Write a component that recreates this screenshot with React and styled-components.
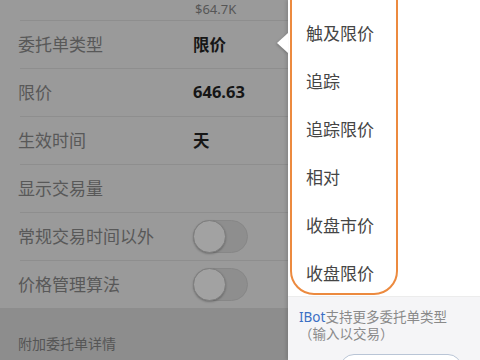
import React from "react";
import styled, { createGlobalStyle } from "styled-components";

const Global = createGlobalStyle`
  html, body { margin: 0; padding: 0; background: #9a9a9a; }
  body { font-family: "Noto Sans", "Noto Sans CJK SC", sans-serif; }
`;

const Page = styled.div`
  position: relative;
  width: 480px;
  height: 360px;
  overflow: hidden;
  display: flex;
`;

const Left = styled.div`
  width: 288px;
  flex: none;
  display: flex;
  flex-direction: column;
  background: #9a9a9a;
`;

const TopStrip = styled.div`
  height: 20px;
  padding-left: 195px;
  font-size: 13px;
  line-height: 18px;
  color: #565656;
`;

const Row = styled.div`
  height: 47px;
  border-top: 1px solid #8e8e8e;
  margin-left: 20px;
  display: flex;
  align-items: center;
`;

const Label = styled.span`
  width: 175px;
  margin-left: -2px;
  margin-top: -2px;
  font-size: 17px;
  color: #585858;
`;

const Value = styled.span`
  margin-top: -2px;
  font-size: 16.5px;
  font-weight: 700;
  color: #161616;
`;

const Toggle = styled.div`
  position: relative;
  width: 53px;
  height: 31px;
  border-radius: 17px;
  background: #8e8e8e;
  border: 1px solid #878787;
`;

const Knob = styled.div`
  position: absolute;
  left: -1px;
  top: -1px;
  width: 31px;
  height: 31px;
  border-radius: 50%;
  background: #a2a2a2;
  border: 1px solid #7e7e7e;
  box-shadow: 0 1px 2px rgba(0, 0, 0, 0.25);
`;

const Section = styled.div`
  flex: 1;
  background: #8d8d8d;
  padding: 25px 0 0 18px;
  font-size: 14px;
  color: #555;
`;

const Popover = styled.div`
  position: relative;
  flex: 1;
  display: flex;
  flex-direction: column;
  background: #fff;
  box-shadow: -2px 0 3px rgba(0, 0, 0, 0.12);
`;

const Pointer = styled.div`
  position: absolute;
  left: -11px;
  top: 33px;
  width: 0;
  height: 0;
  border-top: 10px solid transparent;
  border-bottom: 10px solid transparent;
  border-right: 11px solid #fff;
  filter: drop-shadow(-1px 1px 1px rgba(0, 0, 0, 0.2));
`;

const Menu = styled.div`
  padding-top: 8px;
  display: flex;
  flex-direction: column;
`;

const Item = styled.div`
  height: 48px;
  display: flex;
  align-items: center;
  padding-left: 18px;
  font-size: 17px;
  color: #454545;
`;

const Footer = styled.div`
  flex: 1;
  background: #f5f5f7;
  border-top: 1px solid #ececec;
  padding: 12px 0 0 11px;
  font-size: 13.5px;
  line-height: 17px;
  color: #8a8a8a;
`;

const Blue = styled.span`
  color: #3b6fc4;
`;

const OutlineButton = styled.div`
  margin: 11px 0 0 41px;
  width: 120px;
  height: 30px;
  border: 1.5px solid #b9c5d6;
  border-radius: 14px;
  background: #fff;
`;

const Highlight = styled.div`
  position: absolute;
  left: 290px;
  top: -40px;
  width: 104px;
  height: 331px;
  border: 2px solid #ec8a3f;
  border-radius: 24px;
  pointer-events: none;
`;

const rows = [
  { label: "委托单类型", value: "限价" },
  { label: "限价", value: "646.63" },
  { label: "生效时间", value: "天" },
  { label: "显示交易量" },
  { label: "常规交易时间以外", toggle: true },
  { label: "价格管理算法", toggle: true },
];

const items = ["触及限价", "追踪", "追踪限价", "相对", "收盘市价", "收盘限价"];

export default function App() {
  return (
    <>
      <Global />
      <Page>
        <Left>
          <TopStrip>$64.7K</TopStrip>
          {rows.map((r) => (
            <Row key={r.label}>
              <Label>{r.label}</Label>
              {r.value && <Value>{r.value}</Value>}
              {r.toggle && (
                <Toggle>
                  <Knob />
                </Toggle>
              )}
            </Row>
          ))}
          <Section>附加委托单详情</Section>
        </Left>
        <Popover>
          <Pointer />
          <Menu>
            {items.map((t) => (
              <Item key={t}>{t}</Item>
            ))}
          </Menu>
          <Footer>
            <div>
              <Blue>IBot</Blue>支持更多委托单类型
            </div>
            <div>（输入以交易）</div>
            <OutlineButton />
          </Footer>
        </Popover>
        <Highlight />
      </Page>
    </>
  );
}
